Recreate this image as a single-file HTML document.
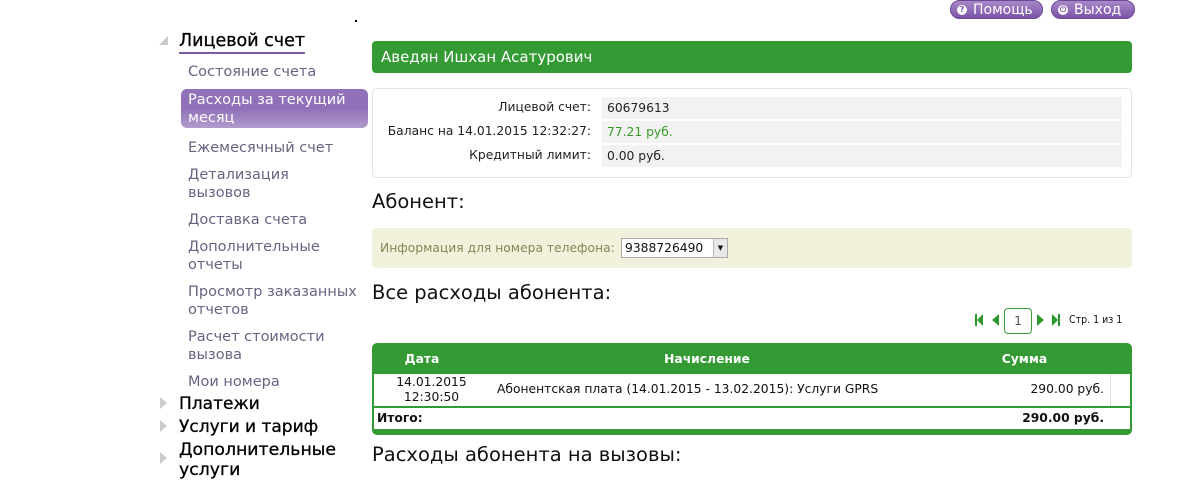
<!DOCTYPE html>
<html><head><meta charset="utf-8"><style>
*{margin:0;padding:0;box-sizing:border-box}
body{width:1185px;height:470px;overflow:hidden;background:#fff;font-family:"DejaVu Sans","Liberation Sans",sans-serif;position:relative}
.a{position:absolute}
.side{color:#6b6282;font-size:14.5px;line-height:18px}
.btn{position:absolute;top:0;height:19px;border-radius:10px;background:linear-gradient(#a887c8,#7a55a8);color:#fff;font-size:14px;line-height:18px;padding-left:22px;border:1px solid #6a4a98}
.btn i{position:absolute;left:6px;top:4px;width:10px;height:10px;border-radius:50%;background:#fff;color:#7a55a8;font-size:8px;line-height:10px;text-align:center;font-style:normal;font-weight:bold}
.cond{font-family:"DejaVu Sans",sans-serif;font-size:12.3px}
.row{position:absolute;left:229px;width:520px;height:22px;background:#f2f2f2;padding-left:5px;line-height:22px}
.lab{position:absolute;left:0;width:218px;text-align:right;line-height:22px}
.tri{position:absolute;width:0;height:0;border-top:6px solid transparent;border-bottom:6px solid transparent;border-left:7px solid #ccc}
.pg{position:absolute;top:314px;width:0;height:0;border-top:6px solid transparent;border-bottom:6px solid transparent}
</style></head><body>
<div class="a" style="left:355px;top:20px;width:2px;height:2px;background:#000"></div>
<div class="btn" style="left:950px;width:93px"><i>?</i>Помощь</div>
<div class="btn" style="left:1051px;width:84px"><i>⏻</i>Выход</div>

<div class="a" style="left:159px;top:36px;width:0;height:0;border-left:9px solid transparent;border-bottom:9px solid #ccc"></div>
<div class="a" style="left:179px;top:31px;font-size:17.5px;color:#000;border-bottom:2px solid #7a5aa8;line-height:20px;padding-bottom:1px;-webkit-text-stroke:0.3px #000">Лицевой счет</div>
<div class="a side" style="left:188px;top:63px">Состояние счета</div>
<div class="a" style="left:181px;top:89px;width:187px;height:39px;border-radius:6px;background:linear-gradient(#9070b8 50%,#b09ccc)"></div>
<div class="a side" style="left:188px;top:91px;color:#fff">Расходы за текущий<br>месяц</div>
<div class="a side" style="left:188px;top:139px">Ежемесячный счет</div>
<div class="a side" style="left:188px;top:166px">Детализация<br>вызовов</div>
<div class="a side" style="left:188px;top:211px">Доставка счета</div>
<div class="a side" style="left:188px;top:238px">Дополнительные<br>отчеты</div>
<div class="a side" style="left:188px;top:283px">Просмотр заказанных<br>отчетов</div>
<div class="a side" style="left:188px;top:328px">Расчет стоимости<br>вызова</div>
<div class="a side" style="left:188px;top:373px">Мои номера</div>
<div class="tri" style="left:160px;top:397px"></div>
<div class="a" style="left:179px;top:394px;font-size:17px;color:#000;-webkit-text-stroke:0.3px #000">Платежи</div>
<div class="tri" style="left:160px;top:420px"></div>
<div class="a" style="left:179px;top:417px;font-size:17px;color:#000;-webkit-text-stroke:0.3px #000">Услуги и тариф</div>
<div class="tri" style="left:160px;top:452px"></div>
<div class="a" style="left:179px;top:440px;font-size:17.3px;color:#000;line-height:20px;-webkit-text-stroke:0.3px #000">Дополнительные<br>услуги</div>

<div class="a" style="left:372px;top:41px;width:760px;height:32px;background:#349b34;border-radius:4px;color:#fff;font-size:15px;line-height:33px;padding-left:9px">Аведян Ишхан Асатурович</div>

<div class="a cond" style="left:372px;top:88px;width:760px;height:90px;border:1px solid #e4e4e4;border-radius:5px;color:#222">
<div class="lab" style="top:7px">Лицевой счет:</div><div class="row" style="top:8px">60679613</div>
<div class="lab" style="top:31px">Баланс на 14.01.2015 12:32:27:</div><div class="row" style="top:32px;color:#3a9a2a">77.21 руб.</div>
<div class="lab" style="top:55px">Кредитный лимит:</div><div class="row" style="top:56px">0.00 руб.</div>
</div>

<div class="a" style="left:372px;top:190px;font-size:19.5px;color:#111">Абонент:</div>
<div class="a cond" style="left:372px;top:228px;width:760px;height:40px;background:#f2f1dc;border-radius:5px;color:#8a8458;line-height:40px;padding-left:8px">Информация для номера телефона:</div>
<div class="a cond" style="left:621px;top:238px;width:107px;height:20px;border:1px solid #aaa;background:#fff;color:#111;line-height:18px;padding-left:3px">9388726490<span style="position:absolute;right:0;top:0;width:14px;height:18px;background:#e8e8e8;border-left:1px solid #bbb;font-size:7px;text-align:center">▼</span></div>

<div class="a" style="left:372px;top:281px;font-size:19.5px;color:#111">Все расходы абонента:</div>
<div class="a" style="left:975px;top:314px;width:2px;height:12px;background:#2d9a2d"></div>
<div class="pg" style="left:977px;border-right:6px solid #2d9a2d"></div>
<div class="pg" style="left:992px;border-right:7px solid #2d9a2d"></div>
<div class="a cond" style="left:1004px;top:308px;width:28px;height:26px;border:1px solid #3a9a3a;border-radius:4px;text-align:center;line-height:24px;color:#555">1</div>
<div class="pg" style="left:1037px;border-left:7px solid #2d9a2d"></div>
<div class="pg" style="left:1052px;border-left:6px solid #2d9a2d"></div>
<div class="a" style="left:1058px;top:314px;width:2px;height:12px;background:#2d9a2d"></div>
<div class="a" style="left:1069px;top:314px;font-size:10.5px;color:#111;font-family:'DejaVu Sans Condensed','DejaVu Sans',sans-serif">Стр. 1 из 1</div>

<div class="a cond" style="left:372px;top:343px;width:760px;height:92px;background:#349b34;border-radius:5px;color:#fff;font-weight:bold">
<div class="a" style="left:0;top:9px;width:100px;text-align:center">Дата</div>
<div class="a" style="left:235px;top:9px;width:200px;text-align:center">Начисление</div>
<div class="a" style="left:590px;top:9px;width:125px;text-align:center">Сумма</div>
<div class="a" style="left:2px;top:31px;width:756px;height:32px;background:#fff;color:#111;font-weight:normal">
<div class="a" style="left:0;top:1px;width:115px;text-align:center;line-height:15px">14.01.2015<br>12:30:50</div>
<div class="a" style="left:123px;top:8px">Абонентская плата (14.01.2015 - 13.02.2015): Услуги GPRS</div>
<div class="a" style="right:26px;top:8px">290.00 руб.</div>
<div class="a" style="left:736px;top:0;width:1px;height:32px;background:#ddd"></div>
</div>
<div class="a" style="left:2px;top:65px;width:756px;height:21px;background:#fff;color:#111;line-height:21px">
<span style="position:absolute;left:3px">Итого:</span><span style="position:absolute;right:26px">290.00 руб.</span></div>
</div>

<div class="a" style="left:372px;top:443px;font-size:19.5px;color:#111">Расходы абонента на вызовы:</div>
</body></html>
